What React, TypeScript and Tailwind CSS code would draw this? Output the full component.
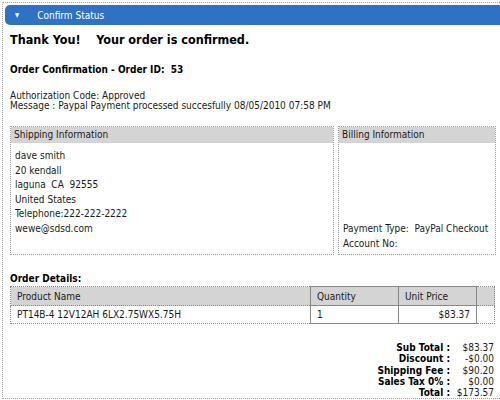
import React from "react";

const totals = [
  ["Sub Total :", "$83.37"],
  ["Discount :", "-$0.00"],
  ["Shipping Fee :", "$90.20"],
  ["Sales Tax 0% :", "$0.00"],
  ["Total :", "$173.57"],
];

export default function App() {
  return (
    <div className="h-[400px] w-[500px] overflow-hidden bg-white pl-[2px] pt-[2px] text-[#1a1a1a] font-stretch-condensed [font-family:'DejaVu_Sans',Verdana,sans-serif]">
      <div className="h-[397px] w-[520px] border-l border-t border-b border-dotted border-[#a0a0a0] pl-[2px] pt-[2px]">
        <div className="flex h-[20px] items-center rounded-l-[5px] bg-[#2f72c4] pl-[10px] text-[10px] text-white">
          <span className="text-[6px] leading-none">▼</span>
          <span className="ml-[18px]">Confirm Status</span>
        </div>

        <div className="pl-[5px]">
          <h1 className="mt-[7px] text-[12.5px] font-bold leading-[16px] text-black">
            Thank You!&nbsp;&nbsp;&nbsp;&nbsp;Your order is confirmed.
          </h1>
          <p className="mt-[16px] text-[10px] font-bold leading-[12px] text-black">
            Order Confirmation - Order ID:&nbsp; 53
          </p>
          <div className="mt-[15px] text-[10px] leading-[10px]">
            <p>Authorization Code: Approved</p>
            <p>Message : Paypal Payment processed succesfully 08/05/2010 07:58 PM</p>
          </div>

          <div className="mt-[15px] flex gap-[4px] text-[10px]">
            <div className="h-[129px] w-[324px] border border-dotted border-[#999]">
              <div className="h-[16px] bg-[#d4d4d4] px-[3px] leading-[16px]">Shipping Information</div>
              <div className="px-[4px] pt-[6px] leading-[14.5px]">
                <p>dave smith</p>
                <p>20 kendall</p>
                <p>laguna&nbsp; CA&nbsp; 92555</p>
                <p>United States</p>
                <p>Telephone:222-222-2222</p>
                <p>wewe@sdsd.com</p>
              </div>
            </div>
            <div className="flex h-[129px] w-[158px] flex-col border border-dotted border-[#999]">
              <div className="h-[16px] bg-[#d4d4d4] px-[3px] leading-[16px]">Billing Information</div>
              <div className="mt-auto whitespace-nowrap px-[4px] pb-[3px] leading-[14.5px]">
                <p>Payment Type:&nbsp; PayPal Checkout</p>
                <p>Account No:</p>
              </div>
            </div>
          </div>

          <p className="mt-[18px] text-[10px] font-bold leading-[12px] text-black">Order Details:</p>
          <table className="mt-[1px] w-[485px] border-collapse text-[10px]">
            <thead>
              <tr className="h-[19px] bg-[#d4d4d4] text-left">
                <th className="w-[300px] border border-dotted border-[#888] px-[6px] font-normal">Product Name</th>
                <th className="w-[88px] border border-solid border-[#888] px-[6px] font-normal">Quantity</th>
                <th className="w-[78px] border border-solid border-[#888] px-[6px] font-normal">Unit Price</th>
                <th className="border border-dotted border-[#888]"></th>
              </tr>
            </thead>
            <tbody>
              <tr className="h-[18px]">
                <td className="border border-dotted border-[#888] px-[6px]">PT14B-4 12V12AH 6LX2.75WX5.75H</td>
                <td className="border border-solid border-[#888] px-[6px]">1</td>
                <td className="border border-solid border-[#888] px-[6px] text-right">$83.37</td>
                <td className="border border-dotted border-[#888]"></td>
              </tr>
            </tbody>
          </table>

          <div className="mt-[18px] flex w-[484px] justify-end text-[10px] leading-[11.3px]">
            <div className="text-right font-bold text-black">
              {totals.map(([k]) => (
                <p key={k}>{k}</p>
              ))}
            </div>
            <div className="w-[44px] text-right">
              {totals.map(([k, v]) => (
                <p key={k}>{v}</p>
              ))}
            </div>
          </div>
        </div>
      </div>
    </div>
  );
}
